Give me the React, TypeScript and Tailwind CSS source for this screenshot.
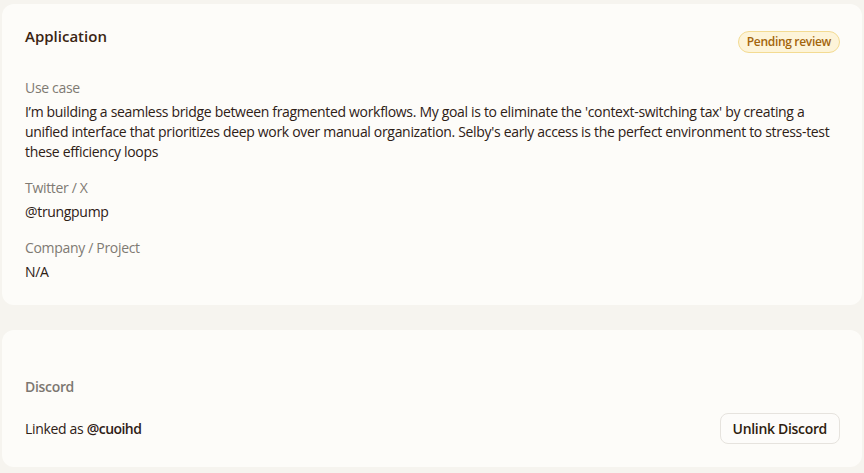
const font = 'font-["Open_Sans","Noto_Sans",sans-serif] tracking-[-0.02em]';

function Field({ label, children }: { label: string; children: React.ReactNode }) {
  return (
    <div className="flex flex-col gap-1">
      <div className="text-[14px] leading-5 text-[#7f7a73]">{label}</div>
      <div className="text-[14px] leading-5 text-[#2e2016]">{children}</div>
    </div>
  );
}

export default function App() {
  return (
    <div className={`min-h-[473px] w-[864px] bg-[#f6f4ef] pt-[4px] ${font}`}>
      <section className="mx-[2px] rounded-xl bg-[#fdfcf9] px-[23px] pt-[22px] pb-[23px]">
        <div className="flex items-start justify-between">
          <h2 className="text-[15px] font-semibold leading-5 tracking-normal text-[#3a2412]">Application</h2>
          <span className="mt-[5px] -mr-[1px] rounded-full border border-[#f3db92] bg-[#fdf4d9] px-[8px] py-[2px] text-[12px] font-semibold leading-4 text-[#a3650b]">
            Pending review
          </span>
        </div>

        <div className="mt-[25px] flex flex-col gap-4">
          <Field label="Use case">
            I’m building a seamless bridge between fragmented workflows. My goal is to eliminate the 'context-switching tax' by creating a unified interface that prioritizes deep work over manual organization. Selby's early access is the perfect environment to stress-test these efficiency loops
          </Field>
          <Field label="Twitter / X">@trungpump</Field>
          <Field label="Company / Project">N/A</Field>
        </div>
      </section>

      <section className="mx-[2px] mt-[25px] rounded-xl bg-[#fdfcf9] px-[23px] pt-[47px] pb-[23px]">
        <div className="text-[14px] font-semibold leading-5 text-[#7c7771]">Discord</div>
        <div className="mt-4 flex items-center justify-between">
          <div className="text-[14px] leading-5 text-[#2e2016]">
            Linked as <span className="font-semibold tracking-[-0.04em]">@cuoihd</span>
          </div>
          <button className="-mr-[1px] h-[31px] rounded-lg border border-[#e6e3de] bg-[#fdfcfa] px-[12px] text-[14px] font-semibold text-[#2e1c0e]">
            Unlink Discord
          </button>
        </div>
      </section>
    </div>
  );
}
